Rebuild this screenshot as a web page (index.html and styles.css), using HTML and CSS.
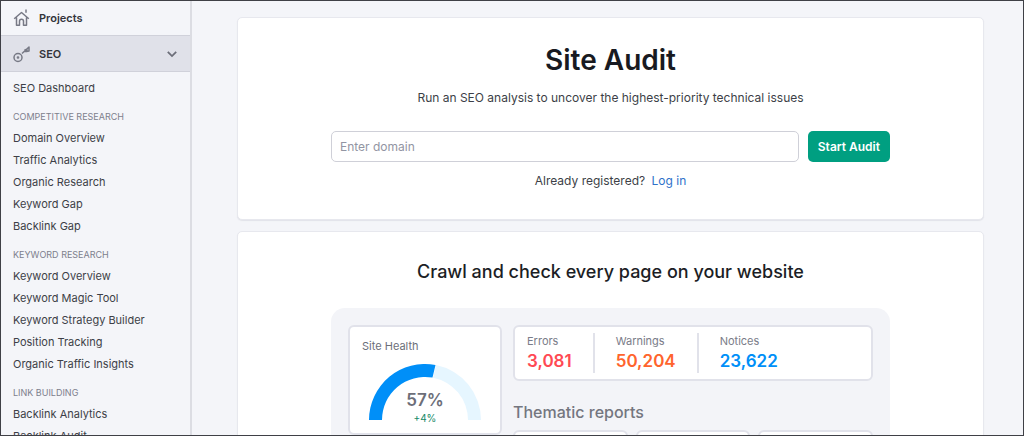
FILE: index.html
```html
<!DOCTYPE html>
<html lang="en">
<head>
<meta charset="utf-8">
<meta name="viewport" content="width=device-width, initial-scale=1">
<title>Site Audit</title>
<link rel="stylesheet" href="styles.css">
</head>
<body>
<div class="app">
  <nav class="sidebar" aria-label="Main">
    <a class="nav-top" href="#">
      <svg class="nav-icon" viewBox="0 0 18 18" aria-hidden="true"><path d="M1.200 9.800 8.500 3.500l7.300 6.300M3.500 8.500v7.700h3v-4q0-2 2-2t2 2v4h3V8.500M13 0.500v3.200"/></svg>
      Projects
    </a>
    <button class="nav-top nav-open" type="button" aria-expanded="true">
      <svg class="nav-icon" viewBox="0 0 18 18" aria-hidden="true"><circle cx="5" cy="12.500" r="4"/><circle cx="5" cy="12.500" r="0.600"/><path d="M9 8.500 16 2v4l-2.500 0.500-1.800-2.200M11.500 6.200l2 0.300 0.500-2.500"/></svg>
      SEO
      <svg class="chevron" viewBox="0 0 10 10" aria-hidden="true"><path d="m1.500 3.200 3.500 3.500 3.500-3.500"/></svg>
    </button>
    <div class="menu">
      <ul class="menu-list">
        <li><a href="#">SEO Dashboard</a></li>
      </ul>
      <h2 class="menu-label">COMPETITIVE RESEARCH</h2>
      <ul class="menu-list">
        <li><a href="#">Domain Overview</a></li>
        <li><a href="#">Traffic Analytics</a></li>
        <li><a href="#">Organic Research</a></li>
        <li><a href="#">Keyword Gap</a></li>
        <li><a href="#">Backlink Gap</a></li>
      </ul>
      <h2 class="menu-label">KEYWORD RESEARCH</h2>
      <ul class="menu-list">
        <li><a href="#">Keyword Overview</a></li>
        <li><a href="#">Keyword Magic Tool</a></li>
        <li><a href="#">Keyword Strategy Builder</a></li>
        <li><a href="#">Position Tracking</a></li>
        <li><a href="#">Organic Traffic Insights</a></li>
      </ul>
      <h2 class="menu-label">LINK BUILDING</h2>
      <ul class="menu-list">
        <li><a href="#">Backlink Analytics</a></li>
        <li><a href="#">Backlink Audit</a></li>
      </ul>
    </div>
  </nav>
  <main class="main">
    <section class="card hero">
      <h1 class="title">Site Audit</h1>
      <p class="lead">Run an SEO analysis to uncover the highest-priority technical issues</p>
      <form class="audit-form">
        <input class="domain" type="text" placeholder="Enter domain" aria-label="Enter domain">
        <button class="start" type="button">Start Audit</button>
      </form>
      <p class="login">Already registered? <a href="#">Log in</a></p>
    </section>
    <section class="card features">
      <h2 class="subtitle">Crawl and check every page on your website</h2>
      <div class="panel">
        <div class="tile health">
          <h3 class="health-title">Site Health</h3>
          <div class="gauge">
            <svg class="gauge-arc" viewBox="0 0 112 56" aria-hidden="true">
              <path class="arc-rest" d="M67 1.100A56 56 0 0 1 112 56H99A43 43 0 0 0 64 13.700Z"/>
              <path class="arc-value" d="M0 56A56 56 0 0 1 66.500 1L63.500 13.600A43 43 0 0 0 13 56Z"/>
            </svg>
            <div class="gauge-text">
              <strong class="percent">57%</strong>
              <span class="delta">+4%</span>
            </div>
          </div>
        </div>
        <div class="details">
          <dl class="tile metrics">
            <div class="metric"><dt>Errors</dt><dd class="errors">3,081</dd></div>
            <div class="metric"><dt>Warnings</dt><dd class="warnings">50,204</dd></div>
            <div class="metric"><dt>Notices</dt><dd class="notices">23,622</dd></div>
          </dl>
          <h3 class="reports-title">Thematic reports</h3>
          <div class="reports">
            <div class="tile report"></div>
            <div class="tile report"></div>
            <div class="tile report"></div>
          </div>
        </div>
      </div>
    </section>
  </main>
</div>
</body>
</html>
```
FILE: styles.css
```css
* {
  box-sizing: border-box;
  margin: 0;
  padding: 0;
}

body {
  font-family: Inter, "Liberation Sans", sans-serif;
  font-size: 12px;
  color: #3d3f47;
  background: #f4f5f9;
}

a {
  color: inherit;
  text-decoration: none;
}

button,
input {
  font: inherit;
}

.app {
  display: flex;
  height: 100vh;
  overflow: hidden;
  border: 1px solid #3f4046;
}

.sidebar {
  flex: none;
  width: 191px;
  height: max-content;
  min-height: 100%;
  border-right: 2px solid #dcdde3;
}

.nav-top {
  display: flex;
  align-items: center;
  gap: 8px;
  width: 100%;
  height: 34px;
  padding: 0 12px;
  font-size: 11px;
  font-weight: 600;
  color: #33343b;
}

.nav-open {
  height: 37px;
  border: solid #d0d1da;
  border-width: 1px 0;
  background: #e0e1e9;
}

.nav-icon {
  width: 18px;
  height: 18px;
  fill: none;
  stroke: #777985;
  stroke-width: 1.5;
  stroke-linejoin: round;
}

.chevron {
  width: 12px;
  height: 12px;
  margin-left: auto;
  fill: none;
  stroke: #6c6e79;
  stroke-width: 1.5;
}

.menu {
  padding: 5px 12px;
  font-size: 11px;
  line-height: 22px;
}

.menu-list {
  margin-bottom: 8px;
  list-style: none;
}

.menu-list a {
  display: block;
}

.menu-label {
  font-size: 9px;
  font-weight: 400;
  line-height: 20px;
  color: #7d808d;
}

.main {
  display: flex;
  flex: 1;
  flex-direction: column;
  gap: 11px;
  height: max-content;
  padding: 16px 39px 16px 45px;
}

.card {
  display: flex;
  flex-direction: column;
  align-items: center;
  padding: 24px 93px;
  border: 1px solid #e7e8ee;
  border-radius: 5px;
  background: #fff;
  box-shadow: 0 1px 1px #e2e3e9;
}

.title {
  font-size: 28px;
  font-weight: 600;
  line-height: 36px;
  color: #181a21;
}

.lead {
  margin-top: 12px;
  line-height: 16px;
}

.audit-form {
  display: flex;
  gap: 9px;
  width: 100%;
  margin-top: 25px;
}

.domain {
  flex: 1;
  min-width: 0;
  height: 31px;
  padding: 0 8px;
  border: 1px solid #cfd0d8;
  border-radius: 5px;
  background: #fff;
}

.domain::placeholder {
  color: #9295a3;
}

.start {
  height: 31px;
  padding: 0 10px;
  border: 0;
  border-radius: 5px;
  font-weight: 600;
  color: #fff;
  background: #009f81;
}

.login {
  margin: 10px 0 5px;
  line-height: 18px;
}

.login a {
  margin-left: 3px;
  color: #2f72ca;
}

.subtitle {
  margin-top: 4px;
  font-size: 18px;
  font-weight: 500;
  line-height: 24px;
  color: #1c1e25;
}

.panel {
  display: flex;
  gap: 11px;
  width: 100%;
  margin-top: 24px;
  padding: 17px;
  border-radius: 14px;
  background: #f3f4f8;
}

.tile {
  border: 2px solid #e1e2ea;
  border-radius: 6px;
  background: #fff;
}

.health {
  flex: none;
  width: 154px;
  height: 110px;
  padding: 11px 12px;
}

.health-title {
  font-size: 11px;
  font-weight: 400;
  line-height: 16px;
  color: #6c6e79;
}

.gauge {
  display: grid;
  justify-items: center;
  margin-top: 10px;
}

.gauge-arc,
.gauge-text {
  grid-area: 1 / 1;
}

.gauge-arc {
  width: 112px;
  height: 56px;
}

.arc-rest {
  fill: #e6f6ff;
}

.arc-value {
  fill: #008ff8;
}

.gauge-text {
  display: flex;
  flex-direction: column;
  align-items: center;
  padding-top: 26px;
}

.percent {
  font-size: 17px;
  font-weight: 600;
  line-height: 20px;
  color: #6c6e79;
}

.delta {
  font-size: 10px;
  line-height: 16px;
  color: #168a68;
}

.details {
  flex: 1;
}

.metrics {
  display: flex;
  height: 56px;
  padding: 6px 12px;
}

.metric {
  padding-right: 21px;
}

.metric + .metric {
  padding-left: 21px;
  border-left: 2px solid #e1e2ea;
}

.metric:last-child {
  padding-right: 0;
}

.metric dt {
  font-size: 11px;
  line-height: 16px;
  color: #7a7c88;
}

.metric dd {
  font-size: 17px;
  font-weight: 600;
  line-height: 24px;
}

.errors {
  color: #ff4953;
}

.warnings {
  color: #ff642d;
}

.notices {
  color: #008ff8;
}

.reports-title {
  margin-top: 20px;
  font-size: 16px;
  font-weight: 500;
  line-height: 22px;
  color: #74767f;
}

.reports {
  display: grid;
  grid-template-columns: repeat(3, 1fr);
  gap: 8px;
  margin-top: 7px;
}

.report {
  height: 80px;
}
```
